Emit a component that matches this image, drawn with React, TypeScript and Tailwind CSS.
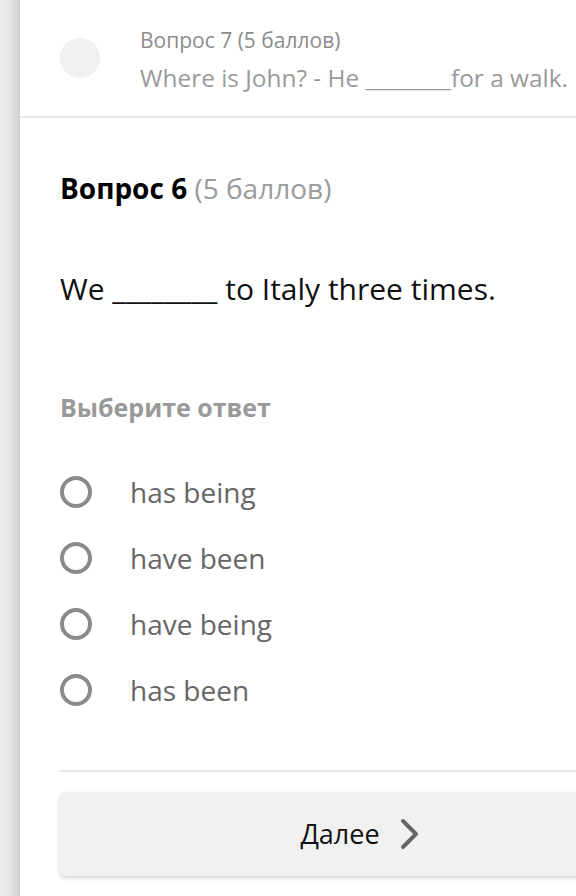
const OPTIONS = ["has being", "have been", "have being", "has been"];

const App = () => {
  return (
    <div className="flex min-h-[896px] w-[576px] overflow-hidden bg-white font-['Open_Sans',sans-serif]">
      <div className="w-5 shrink-0 bg-gradient-to-r from-[#ededed] via-[#e6e6e6] to-[#cfcfcf]" />
      <div className="flex min-w-0 flex-1 flex-col">
        <div className="flex h-[118px] items-center gap-10 border-b-2 border-[#e8e8e8] pl-10">
          <div className="h-10 w-10 shrink-0 rounded-full bg-[#f0f0f0]" />
          <div className="flex flex-col gap-2 whitespace-nowrap pt-1">
            <span className="text-[21px] leading-[28px] text-[#8c8c8c]">Вопрос 7 (5 баллов)</span>
            <span className="text-[24.4px] leading-[32px] text-[#9a9a9a]">
              Where is John? - He ________for a walk.
            </span>
          </div>
        </div>

        <div className="flex flex-col pl-10">
          <h2 className="mt-[51px] whitespace-nowrap text-[28px] leading-[38px] text-black">
            <span className="font-bold">Вопрос 6</span>{" "}
            <span className="text-[#9a9a9a]">(5 баллов)</span>
          </h2>
          <p className="mt-[62px] whitespace-nowrap text-[30px] leading-[40px] text-[#111]">
            We ________ to Italy three times.
          </p>
          <p className="mt-[81px] text-[25px] font-bold leading-[34px] text-[#999]">Выберите ответ</p>

          <div className="mt-[50px] flex flex-col gap-[30px]">
            {OPTIONS.map((option) => (
              <label key={option} className="flex h-9 items-center gap-[38px]">
                <span className="h-8 w-8 shrink-0 rounded-full border-[4px] border-[#8a8a8a]" />
                <span className="text-[28px] leading-9 text-[#666]">{option}</span>
              </label>
            ))}
          </div>

          <div className="mt-[62px] h-[2px] bg-[#e6e6e6]" />

          <button className="mt-[20px] -mr-[84px] flex h-[84px] items-center justify-center gap-5 rounded-md bg-[#f1f1f1] shadow-[0_2px_4px_rgba(0,0,0,0.18)]">
            <span className="text-[27px] leading-9 text-[#111]">Далее</span>
            <svg viewBox="0 0 20 32" className="h-8 w-5" fill="none">
              <path d="M3 3l13 13L3 29" stroke="#666" strokeWidth="4" strokeLinecap="round" strokeLinejoin="round" />
            </svg>
          </button>
        </div>
      </div>
    </div>
  );
};

export default App;
